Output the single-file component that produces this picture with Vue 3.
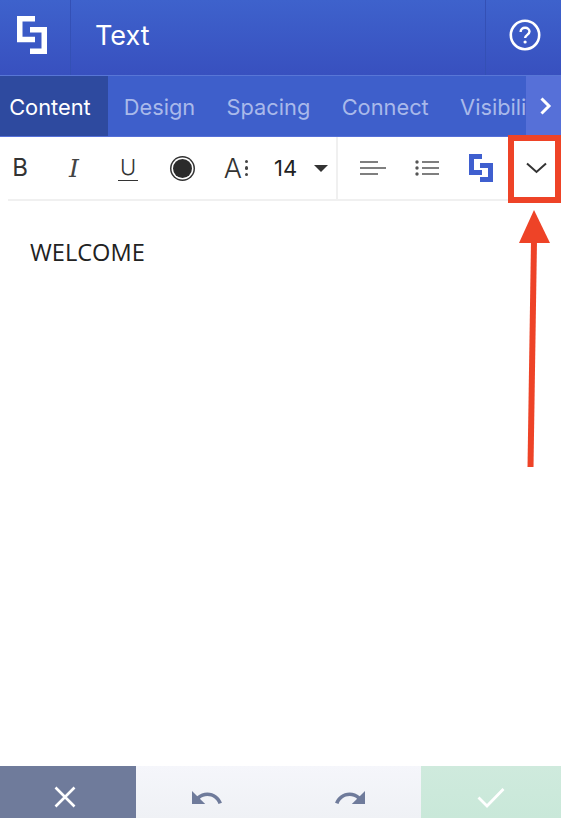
<script setup>
const tabs = ['Content', 'Design', 'Spacing', 'Connect', 'Visibility']
</script>

<template>
  <div class="page">
    <header class="topbar">
      <div class="logo-cell">
        <svg class="logo" width="30" height="38" viewBox="0 0 30 38" fill="none" stroke="#fff" stroke-width="5.5">
          <path d="M18 2.75H2.75V23.500H18" />
          <path d="M13 13.750H27.250V35.250H13" />
        </svg>
      </div>
      <div class="title">Text</div>
      <div class="help-cell">
        <svg width="32" height="32" viewBox="0 0 32 32" fill="none" stroke="#fff" stroke-width="2.6">
          <circle cx="16" cy="16" r="14.2" />
          <path d="M11.600 13c0-2.600 2-4.200 4.500-4.200s4.400 1.600 4.400 3.800c0 3.200-4.400 3.300-4.400 6.400" stroke-width="2.4" />
          <circle cx="16.100" cy="23" r="1.600" fill="#fff" stroke="none" />
        </svg>
      </div>
    </header>

    <nav class="tabs">
      <div class="tab-strip">
        <div v-for="(tab, i) in tabs" :key="tab" class="tab" :class="{ active: i === 0 }">{{ tab }}</div>
      </div>
      <div class="tab-next">
        <svg width="13" height="18" viewBox="0 0 13 18" fill="none" stroke="#fff" stroke-width="3">
          <path d="M2.500 1.500 10 9l-7.500 7.500" />
        </svg>
      </div>
    </nav>

    <div class="toolbar">
      <div class="tool first"><span class="glyph bold">B</span></div>
      <div class="tool"><span class="glyph italic">I</span></div>
      <div class="tool"><span class="glyph under">U</span></div>
      <div class="tool"><span class="swatch"></span></div>
      <div class="tool">
        <span class="glyph size">A</span>
        <span class="dots"><i></i><i></i><i></i></span>
      </div>
      <div class="size-select">
        <span>14</span>
        <span class="caret"></span>
      </div>
      <div class="divider"></div>
      <div class="tool">
        <svg width="26" height="16" viewBox="0 0 26 16" fill="none" stroke="#555" stroke-width="1.7">
          <path d="M0 2h18M0 8h26M0 14h18" />
        </svg>
      </div>
      <div class="tool">
        <svg width="24" height="16" viewBox="0 0 24 16" fill="none" stroke="#555" stroke-width="1.7">
          <path d="M7 2h17M7 8h17M7 14h17" />
          <circle cx="2" cy="2" r="1.700" fill="#555" stroke="none" />
          <circle cx="2" cy="8" r="1.700" fill="#555" stroke="none" />
          <circle cx="2" cy="14" r="1.700" fill="#555" stroke="none" />
        </svg>
      </div>
      <div class="tool">
        <svg width="24" height="28" viewBox="0 0 24 28" fill="none" stroke="#3f5fcf" stroke-width="5">
          <path d="M13 2.500H2.500V18.500H13" />
          <path d="M11 11.500H21.500V25.500H11" />
        </svg>
      </div>
      <div class="tool last">
        <svg width="21" height="12" viewBox="0 0 21 12" fill="none" stroke="#333" stroke-width="2">
          <path d="M1 1.500 10.500 10 20 1.500" />
        </svg>
      </div>
    </div>

    <main class="editor">WELCOME</main>

    <footer class="actions">
      <div class="action cancel">
        <svg width="22" height="22" viewBox="0 0 22 22" fill="none" stroke="#fff" stroke-width="2.6">
          <path d="M1.500 1.500l19 19M20.500 1.500l-19 19" />
        </svg>
      </div>
      <div class="history">
        <div class="action">
          <svg width="30" height="13" viewBox="2 7 20.500 9" preserveAspectRatio="none" fill="#6f7b9b">
            <path d="M12.500 8c-2.650 0-5.050.99-6.900 2.600L2 7v9h9l-3.620-3.620c1.390-1.160 3.160-1.880 5.120-1.880 3.540 0 6.550 2.310 7.600 5.500l2.370-.78C21.080 11.030 17.150 8 12.500 8z" />
          </svg>
        </div>
        <div class="action">
          <svg width="30" height="13" viewBox="1.500 7 20.500 9" preserveAspectRatio="none" fill="#6f7b9b">
            <path d="M18.400 10.600C16.550 8.990 14.150 8 11.500 8c-4.650 0-8.580 3.030-9.960 7.220L3.900 16c1.050-3.190 4.050-5.500 7.600-5.500 1.950 0 3.730.72 5.120 1.880L13 16h9V7l-3.600 3.600z" />
          </svg>
        </div>
      </div>
      <div class="action confirm">
        <svg width="28" height="21" viewBox="0 0 28 21" fill="none" stroke="#fff" stroke-width="2.800">
          <path d="M1.500 10.500 10 19 26.500 2" />
        </svg>
      </div>
    </footer>

    <!-- annotation drawn over the screenshot -->
    <div class="mark-box"></div>
    <svg class="mark-arrow" width="36" height="262" viewBox="0 0 36 262">
      <path d="M17 0 33 33H2Z" fill="#ee4327" />
      <path d="M14 30h6L16.500 257h-6Z" fill="#ee4327" />
    </svg>
  </div>
</template>

<style>
html,
body {
  margin: 0;
  background: #fff;
}
</style>

<style scoped>
.page {
  position: relative;
  width: 561px;
  height: 818px;
  display: flex;
  flex-direction: column;
  overflow: hidden;
  background: #fff;
  font-family: Inter, "Noto Sans", sans-serif;
}

.topbar {
  display: flex;
  flex: 0 0 75px;
  color: #fff;
  background: linear-gradient(#3e62cc, #3850bf);
}
.logo-cell {
  flex: 0 0 71px;
  display: flex;
  align-items: center;
  box-sizing: border-box;
  padding-left: 17px;
  padding-bottom: 5px;
  border-right: 1px solid #3450b5;
}
.title {
  flex: 1;
  padding-left: 24px;
  font-size: 27px;
  line-height: 72px;
}
.help-cell {
  flex: 0 0 76px;
  display: flex;
  align-items: center;
  justify-content: center;
  box-sizing: border-box;
  padding-left: 3px;
  padding-bottom: 5px;
  border-left: 1px solid #3450b5;
}

.tabs {
  display: flex;
  flex: 0 0 62px;
  min-height: 0;
  box-sizing: border-box;
  border-top: 1px solid #5876d6;
  border-bottom: 1px solid #5570d8;
  background: #3e5fcb;
}
.tab-strip {
  flex: 1;
  display: flex;
  overflow: hidden;
}
.tab {
  flex: none;
  height: 60px;
  padding: 0 15.700px;
  font-size: 21.800px;
  line-height: 62px;
  color: #a9b9ea;
}
.tab:first-child {
  margin-left: -6.500px;
  padding-right: 17.300px;
}
.tab.active {
  color: #fff;
  background: #2e4a9f;
}
.tab-next {
  flex: 0 0 35px;
  display: flex;
  align-items: center;
  justify-content: center;
  padding-left: 4px;
  box-sizing: border-box;
  background: #5670d8;
}

.toolbar {
  display: flex;
  flex: 0 0 64px;
  box-sizing: border-box;
  margin-left: 8px;
  border-bottom: 2px solid #f0f0f0;
}
.tool {
  flex: 0 0 54px;
  display: flex;
  align-items: center;
  justify-content: center;
  color: #333;
}
.tool.first {
  margin-left: -15px;
}
.tool.last {
  padding-left: 2px;
  box-sizing: border-box;
}
.glyph {
  line-height: 1;
}
.bold {
  font-size: 24px;
  font-weight: 400;
}
.italic {
  font-family: "DejaVu Serif", serif;
  font-style: italic;
  font-size: 25px;
  color: #444;
}
.under {
  font-size: 22px;
  font-weight: 300;
  padding: 0 2px 2px;
  border-bottom: 1px solid #333;
}
.swatch {
  width: 19px;
  height: 19px;
  border-radius: 50%;
  background: #2b2b2b;
  box-shadow: 0 0 0 1.500px #fff, 0 0 0 3px #333;
}
.size {
  font-size: 27px;
  font-weight: 300;
}
.dots {
  display: flex;
  flex-direction: column;
  gap: 3px;
  margin-left: 3px;
}
.dots i {
  width: 3.500px;
  height: 3.500px;
  border-radius: 50%;
  background: #444;
}
.size-select {
  flex: 0 0 73px;
  display: flex;
  align-items: center;
  box-sizing: border-box;
  padding-left: 11px;
  font-size: 22px;
  color: #222;
}
.caret {
  margin-left: 17px;
  border-left: 7px solid transparent;
  border-right: 7px solid transparent;
  border-top: 7px solid #333;
}
.divider {
  flex: 0 0 2px;
  margin-right: 8px;
  background: #f0f0f0;
}

.editor {
  flex: 1;
  padding: 35px 30px 0;
  font-family: "Open Sans", sans-serif;
  font-size: 23.600px;
  line-height: 32px;
  color: #222;
}

.actions {
  display: flex;
  flex: 0 0 52px;
}
.action {
  display: flex;
  align-items: center;
  justify-content: center;
  flex: 1;
  padding-top: 10px;
  box-sizing: border-box;
}
.cancel {
  flex: 0 0 136px;
  padding-right: 6px;
  background: #6f7b9b;
}
.history {
  flex: 0 0 285px;
  display: flex;
  background: linear-gradient(#f5f6fb, #eff1f5);
}
.confirm {
  flex: 0 0 140px;
  background: linear-gradient(#cfeadd, #c9e8d9);
}

.mark-box {
  position: absolute;
  left: 508px;
  top: 135px;
  width: 53px;
  height: 68px;
  box-sizing: border-box;
  border: 6px solid #ee4327;
}
.mark-arrow {
  position: absolute;
  left: 517px;
  top: 210px;
}
</style>
